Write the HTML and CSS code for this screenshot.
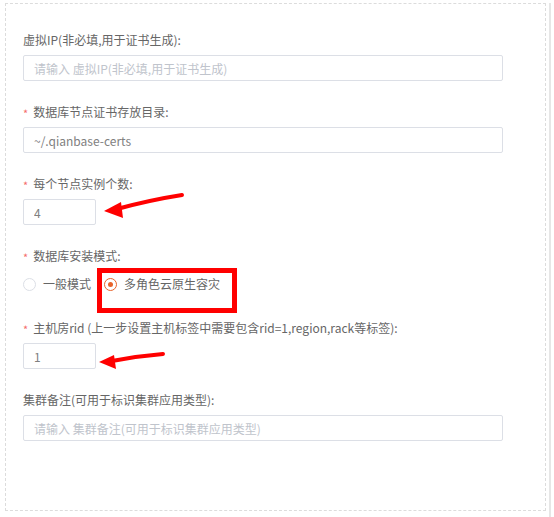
FILE: index.html
```html
<!DOCTYPE html>
<html lang="zh-CN">

<head>
  <meta charset="UTF-8">
  <meta name="viewport" content="width=device-width, initial-scale=1.0">
  <title>集群配置</title>
  <link rel="stylesheet" href="styles.css">
</head>

<body>
  <div class="page">
    <div class="panel">
      <form class="cluster-form">
        <div class="form-item">
          <label class="form-label" for="vip">虚拟IP(非必填,用于证书生成):</label>
          <input class="form-input" type="text" id="vip" placeholder="请输入 虚拟IP(非必填,用于证书生成)">
        </div>
        <div class="form-item">
          <label class="form-label is-required" for="certDir">数据库节点证书存放目录:</label>
          <input class="form-input" type="text" id="certDir" value="~/.qianbase-certs">
        </div>
        <div class="form-item">
          <label class="form-label is-required" for="instances">每个节点实例个数:</label>
          <input class="form-input small" type="text" id="instances" value="4">
        </div>
        <div class="form-item">
          <label class="form-label is-required">数据库安装模式:</label>
          <div class="radio-group">
            <label class="radio">
              <input type="radio" name="mode" value="normal">
              <span class="radio-dot"></span>
              <span class="radio-text">一般模式</span>
            </label>
            <label class="radio">
              <input type="radio" name="mode" value="cloud" checked>
              <span class="radio-dot"></span>
              <span class="radio-text">多角色云原生容灾</span>
            </label>
          </div>
        </div>
        <div class="form-item">
          <label class="form-label is-required" for="rid">主机房rid (上一步设置主机标签中需要包含rid=1,region,rack等标签):</label>
          <input class="form-input small" type="text" id="rid" value="1">
        </div>
        <div class="form-item">
          <label class="form-label" for="remark">集群备注(可用于标识集群应用类型):</label>
          <input class="form-input" type="text" id="remark" placeholder="请输入 集群备注(可用于标识集群应用类型)">
        </div>
      </form>
    </div>

    <!-- screenshot annotations -->
    <svg class="marks" width="554" height="517" viewBox="0 0 554 517">
      <path d="M117 206 Q150 197 182 192" fill="none" stroke="#f00" stroke-width="4" stroke-linecap="round" />
      <polygon points="104,208 121,199 123,215" fill="#f00" />
      <rect x="99.5" y="267.5" width="135" height="40" fill="none" stroke="#f00" stroke-width="5" />
      <path d="M112 358 Q138 353 163 351" fill="none" stroke="#f00" stroke-width="4" stroke-linecap="round" />
      <polygon points="99,359 114,352 116,366" fill="#f00" />
    </svg>
  </div>
</body>

</html>
```

FILE: styles.css
```css
body {
  margin: 0;
  padding: 0;
  font-family: "Noto Sans CJK SC", "Noto Sans", sans-serif;
  font-size: 12px;
  color: #666;
  background: #fff;
}

.page {
  position: relative;
  width: 549px;
  height: 517px;
  border-right: 2px solid #e6e6e6;
}

.panel {
  margin: 3px 0 0 5px;
  width: 541px;
  height: 508px;
  border: 1px dashed #dcdcdc;
  padding: 26px 0 0 17px;
  box-sizing: border-box;
}

.form-item {
  display: flex;
  flex-direction: column;
  align-items: flex-start;
  margin-bottom: 21px;
}

.form-label {
  height: 20px;
  line-height: 20px;
  margin-bottom: 5px;
}

.form-label.is-required::before {
  content: "*";
  color: #f56c6c;
  font-size: 11px;
  margin-right: 5px;
  position: relative;
  top: 1px;
}

.form-input {
  width: 480px;
  height: 26px;
  box-sizing: border-box;
  border: 1px solid #dcdfe6;
  border-radius: 2px;
  padding: 0 10px;
  font-family: inherit;
  font-size: 12px;
  color: #808080;
  outline: none;
}

.form-input::placeholder {
  color: #c0c4cc;
}

.form-input.small {
  width: 73px;
}

.radio-group {
  display: flex;
  align-items: center;
  height: 26px;
  gap: 13px;
}

.radio {
  display: flex;
  align-items: center;
  cursor: pointer;
}

.radio input {
  display: none;
}

.radio-dot {
  width: 13px;
  height: 13px;
  box-sizing: border-box;
  border: 1px solid #dcdfe6;
  border-radius: 50%;
  margin-right: 7px;
  position: relative;
}

.radio input:checked + .radio-dot {
  border-color: #e8632b;
}

.radio input:checked + .radio-dot::after {
  content: "";
  position: absolute;
  left: 3px;
  top: 3px;
  width: 5px;
  height: 5px;
  border-radius: 50%;
  background: #e8632b;
}

.radio-text {
  line-height: 20px;
}

.marks {
  position: absolute;
  left: 0;
  top: 0;
  pointer-events: none;
}
```
